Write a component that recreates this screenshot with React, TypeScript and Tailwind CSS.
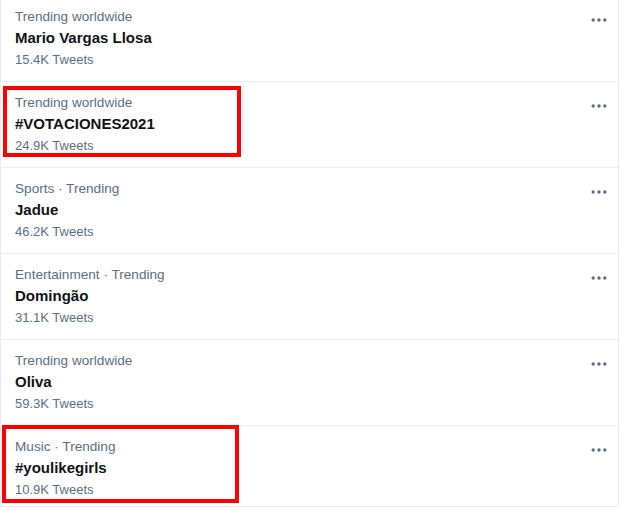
const trends = [
  { meta: "Trending worldwide", name: "Mario Vargas Llosa", count: "15.4K Tweets" },
  { meta: "Trending worldwide", name: "#VOTACIONES2021", count: "24.9K Tweets" },
  { meta: "Sports · Trending", name: "Jadue", count: "46.2K Tweets" },
  { meta: "Entertainment · Trending", name: "Domingão", count: "31.1K Tweets" },
  { meta: "Trending worldwide", name: "Oliva", count: "59.3K Tweets" },
  { meta: "Music · Trending", name: "#youlikegirls", count: "10.9K Tweets" },
];

function MoreIcon() {
  return (
    <svg viewBox="0 0 24 24" className="size-5 fill-[#5b7083]">
      <circle cx="5" cy="12" r="2" />
      <circle cx="12" cy="12" r="2" />
      <circle cx="19" cy="12" r="2" />
    </svg>
  );
}

export default function App() {
  return (
    <div className="relative h-[508px] w-[620px] overflow-hidden bg-white font-['Liberation_Sans',Arial,sans-serif]">
      <div className="h-[507px] w-[619px] overflow-hidden border-x border-b border-[#e6ecf0]">
        <div className="-mt-1">
          {trends.map((t) => (
            <div key={t.name} className="flex justify-between border-b border-[#ebeef0] pb-[10px] pl-[14px] pr-[9px] pt-[11px]">
              <div className="flex flex-col">
                <span className="text-[13.6px] leading-5 text-[#5b7083]">{t.meta}</span>
                <span className="text-[15px] font-bold leading-[22px] text-[#0f1419]">{t.name}</span>
                <span className="text-[13px] leading-[22px] text-[#5b7083]">{t.count}</span>
              </div>
              <div className="mt-[3px]">
                <MoreIcon />
              </div>
            </div>
          ))}
        </div>
      </div>

      {/* highlight boxes */}
      <div className="absolute left-[3px] top-[86px] h-[71px] w-[238px] border-4 border-[#ff0000]" />
      <div className="absolute left-[2px] top-[425px] h-[78px] w-[237px] border-4 border-[#ff0000]" />
    </div>
  );
}
